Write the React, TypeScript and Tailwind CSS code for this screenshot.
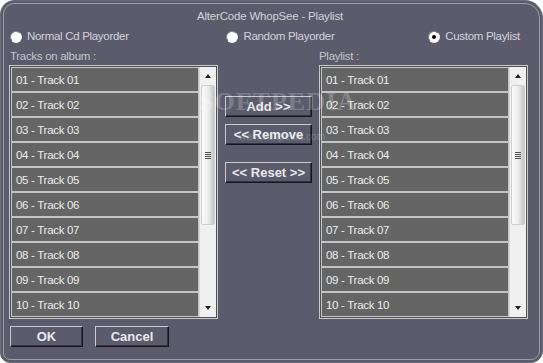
import React from 'react';

const tracks = Array.from({ length: 10 }, (_, i) => {
  const n = String(i + 1).padStart(2, '0');
  return `${n} - Track ${n}`;
});

const font = { fontFamily: '"Liberation Sans", Arial, sans-serif' };

function Radio({ checked }: { checked?: boolean }) {
  return (
    <span className="relative flex h-[12px] w-[12px] items-center justify-center rounded-full border border-t-[#80808a] border-l-[#80808a] border-r-[#e8e8ee] border-b-[#e8e8ee] bg-white">
      {checked && <span className="h-[4px] w-[4px] rounded-full bg-black" />}
    </span>
  );
}

function ScrollBar() {
  return (
    <div className="flex w-[17px] flex-col items-center border-l border-[#d8d8d8] bg-[#f0f0f0]">
      <div className="mt-[7px] h-0 w-0 border-x-[3.5px] border-b-[4px] border-x-transparent border-b-[#202020]" />
      <div className="mt-[7px] flex h-[140px] w-[14px] items-center justify-center rounded-[2px] border border-[#d0d0d0] bg-gradient-to-r from-[#fafafa] via-[#eeeeee] to-[#c4c4c4]">
        <div className="flex flex-col gap-[1px]">
          <div className="h-[1px] w-[6px] bg-[#505050]" />
          <div className="h-[1px] w-[6px] bg-[#505050]" />
          <div className="h-[1px] w-[6px] bg-[#505050]" />
          <div className="h-[1px] w-[6px] bg-[#505050]" />
        </div>
      </div>
      <div className="flex-1" />
      <div className="mb-[7px] h-0 w-0 border-x-[3.5px] border-t-[4px] border-x-transparent border-t-[#202020]" />
    </div>
  );
}

function TrackList() {
  return (
    <div className="flex h-[254px] w-[209px] border border-[#c8c8c8] bg-[#50505a] p-[1px]">
      <div className="flex flex-1 flex-col">
        {tracks.map(t => (
          <div
            key={t}
            className="flex h-[25px] items-center border border-[#c4c4c4] bg-[#656565] pl-[4px] pt-[2px] text-[11.5px] tracking-[-0.3px] text-[#ececec]"
          >
            {t}
          </div>
        ))}
      </div>
      <ScrollBar />
    </div>
  );
}

function Btn({ label, className }: { label: string; className: string }) {
  return (
    <button
      type="button"
      className={`flex h-[21px] items-center justify-center border border-t-[#c8c8d0] border-l-[#c8c8d0] border-r-[#16161c] border-b-[#16161c] bg-[#5b5b6b] pt-[1px] text-[13px] font-bold text-[#e8e8ee] shadow-[inset_-1px_-1px_0_#34343e] ${className}`}
    >
      {label}
    </button>
  );
}

export default function App() {
  return (
    <div className="h-[363px] w-[543px] bg-white" style={font}>
      <div className="relative h-full w-full rounded-[14px_18px_12px_10px] border border-[#6c6c7a] bg-[#5b5b6b] p-[2px]">
        <div className="flex h-full flex-col rounded-[11px_15px_9px_7px] border border-[#9c9ca8] pl-[5px] pr-[8px] pt-[1px]">
          <div className="flex h-[22px] items-center justify-center pt-[1px] text-[11.5px] tracking-[-0.2px] text-[#d2d2da]">
            AlterCode WhopSee - Playlist
          </div>

          <div className="flex h-[20px] items-center justify-between pl-[1px] pr-[11px] text-[11.5px] tracking-[-0.3px] text-[#d2d2da]">
            <div className="flex items-center gap-[5px]">
              <Radio />
              <span>Normal Cd Playorder</span>
            </div>
            <div className="flex items-center gap-[5px] pl-[4px]">
              <Radio />
              <span>Random Playorder</span>
            </div>
            <div className="flex items-center gap-[5px]">
              <Radio checked />
              <span>Custom Playlist</span>
            </div>
          </div>

          <div className="flex h-[18px] items-center pt-[1px] text-[11.5px] tracking-[-0.3px] text-[#c4c4cc]">
            <span className="w-[310px] pl-[1px]">Tracks on album :</span>
            <span>Playlist :</span>
          </div>

          <div className="flex">
            <TrackList />
            <div className="flex w-[101px] flex-col px-[7px] pt-[31px]">
              <Btn label="Add >>" className="w-full" />
              <Btn label="<< Remove" className="mt-[7px] w-full" />
              <Btn label="<< Reset >>" className="mt-[17px] w-full" />
            </div>
            <TrackList />
          </div>

          <div className="mt-[7px] flex gap-[12px] pl-[1px]">
            <Btn label="OK" className="w-[73px]" />
            <Btn label="Cancel" className="w-[74px]" />
          </div>
        </div>

        <div className="pointer-events-none absolute left-[198px] top-[88px] flex flex-col items-center opacity-20">
          <span className="text-[26px] font-bold leading-none tracking-[1px] text-white" style={{ fontFamily: '"Liberation Serif", serif' }}>
            SOFTPEDIA<sup className="text-[7px]">™</sup>
          </span>
          <span className="mt-[14px] text-[10px] text-white">www.softpedia.com</span>
        </div>
      </div>
    </div>
  );
}
